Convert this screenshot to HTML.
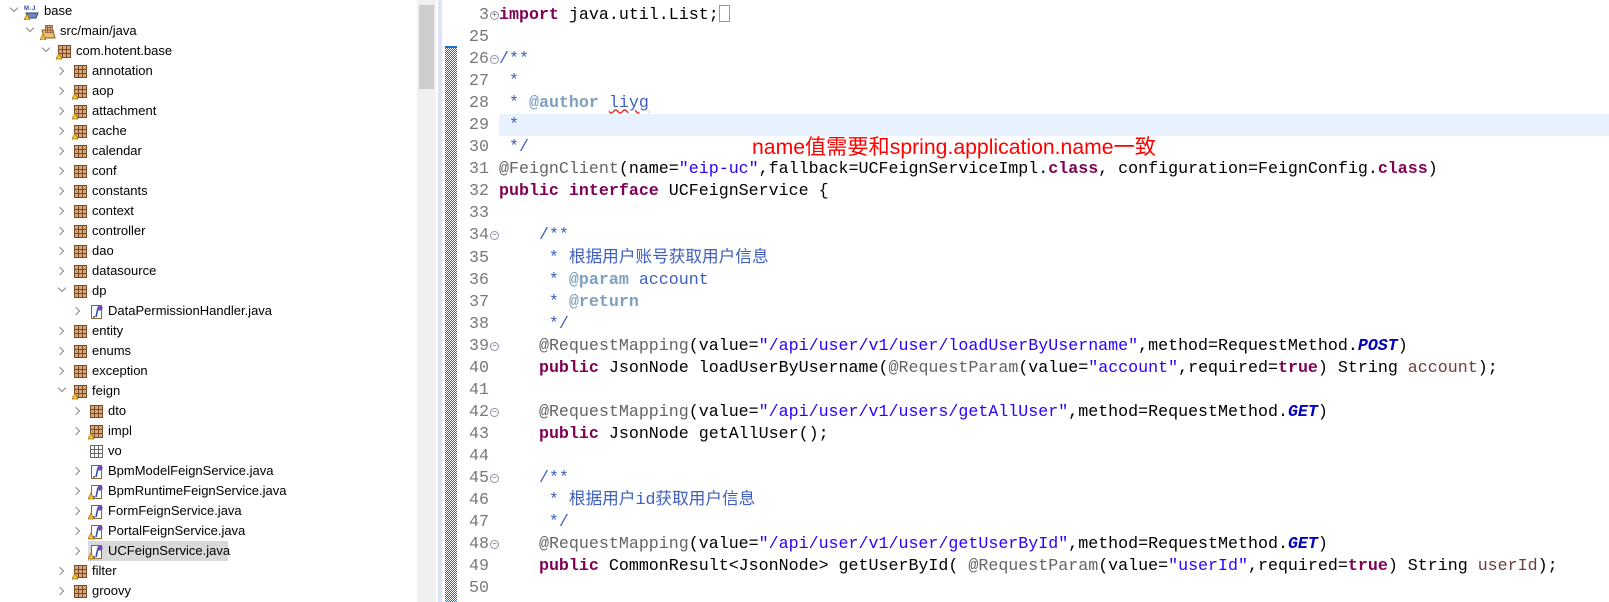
<!DOCTYPE html>
<html><head><meta charset="utf-8"><style>
body{margin:0;width:1609px;height:602px;overflow:hidden;background:#fff;position:relative;font-family:"Liberation Sans","Noto Sans CJK SC",sans-serif}
#tree{position:absolute;left:0;top:0;width:418px;height:602px;background:#fff}
.r{position:absolute;height:20px;line-height:20px;font-size:13px;color:#000;white-space:nowrap}
.r .ch{position:absolute;top:6px;width:5px;height:5px;border-right:1.5px solid #888;border-bottom:1.5px solid #888}
.r .ic{position:absolute;top:3px}
#sb{position:absolute;left:417px;top:0;width:19px;height:602px;background:#f0f0f0}
#thumb{position:absolute;left:419px;top:5px;width:15px;height:84px;background:#cdcdcd}
#ruler{position:absolute;left:438px;top:0;width:4px;height:602px;background:#dde4f5}
#hatch{position:absolute;left:445px;top:48px;width:12px;height:554px;background-color:#1a6fd6;background-image:repeating-conic-gradient(#fff 0 25%,#1a6fd6 0 50%);background-size:2px 2px}
#hatch:before{content:"";position:absolute;left:0;top:-2px;width:12px;height:2px;background:#1a6fd6}
#hl{position:absolute;left:499px;top:114px;width:1110px;height:22px;background:#e8f2fe}
#code{position:absolute;left:0;top:4px;font-family:"Liberation Mono","Noto Sans CJK SC",monospace;font-size:16.65px;line-height:22.05px}
.l{position:relative;height:22.05px;white-space:pre}
.n{position:absolute;left:440px;width:49px;text-align:right;color:#787878}
.f{position:absolute;left:490px;top:7px;width:7px;height:7px;border:1px solid #8a93a8;border-radius:50%;font-size:8px;line-height:7px;text-align:center;color:#556}
.t{position:absolute;left:499px;color:#000}
.k{color:#7f0055;font-weight:bold}
.c{color:#3f5fbf}
.jt{color:#7f9fbf;font-weight:bold}
.a{color:#646464}
.s{color:#2a00ff}
.e{color:#0000c0;font-weight:bold;font-style:italic}
#note{position:absolute;left:752px;top:135px;color:#f00;font-size:21.2px;line-height:26px;font-family:"Liberation Sans","Noto Sans CJK SC",sans-serif;white-space:nowrap}
</style></head><body>
<div id="tree">
<svg width="0" height="0" style="position:absolute"><defs>
<g id="pk"><rect x="0.5" y="0.5" width="12" height="12" fill="#d9a87a" stroke="#7a4a25"/><path d="M4.5 0.5v12M8.5 0.5v12M0.5 4.5h12M0.5 8.5h12" stroke="#7a4a25"/></g>
<g id="pe"><rect x="0.5" y="0.5" width="12" height="12" fill="#fff" stroke="#666"/><path d="M4.5 0.5v12M8.5 0.5v12M0.5 4.5h12M0.5 8.5h12" stroke="#666"/></g>
<g id="wn"><path d="M3 6l3 6h-6z" fill="#f5c542" stroke="#a07000" stroke-width="0.8"/></g>
<g id="jf"><rect x="1.5" y="0.5" width="10" height="13" fill="#fff" stroke="#8a6a2a"/><path d="M8 3l-2 9M5 12h-2" stroke="#3050b0" stroke-width="1.6" fill="none"/><circle cx="10" cy="3" r="2.6" fill="#6a4fb0"/></g>
</defs></svg>
</div>
<div id="sb"></div><div id="thumb"></div>
<div id="ruler"></div><div id="hatch"></div><div id="hl"></div>
<div id="note">name值需要和spring.application.name一致</div>
<div id="code"></div>
<script>
var items=[
[0,'e','base','prj'],[1,'e','src/main/java','src'],[2,'e','com.hotent.base','pkw'],
[3,'c','annotation','pk'],[3,'c','aop','pkw'],[3,'c','attachment','pkw'],[3,'c','cache','pkw'],[3,'c','calendar','pk'],[3,'c','conf','pk'],[3,'c','constants','pk'],[3,'c','context','pk'],[3,'c','controller','pk'],[3,'c','dao','pk'],[3,'c','datasource','pk'],
[3,'e','dp','pk'],[4,'c','DataPermissionHandler.java','jf'],[3,'c','entity','pk'],[3,'c','enums','pk'],[3,'c','exception','pk'],[3,'e','feign','pkw'],
[4,'c','dto','pk'],[4,'c','impl','pkw'],[4,'','vo','pe'],[4,'c','BpmModelFeignService.java','jf'],[4,'c','BpmRuntimeFeignService.java','jfw'],[4,'c','FormFeignService.java','jfw'],[4,'c','PortalFeignService.java','jfw'],[4,'c','UCFeignService.java','jfw'],[3,'c','filter','pkw'],[3,'c','groovy','pk']];
var h='';
items.forEach(function(it,i){
 var lv=it[0],x=13+lv*16,y=1.3+20*i;
 var ch='';
 if(it[1]=='e')ch='<span class="ch" style="left:'+(x-2)+'px;top:4px;transform:rotate(45deg)"></span>';
 else if(it[1]=='c')ch='<span class="ch" style="left:'+(x-4)+'px;top:7px;transform:rotate(-45deg)"></span>';
 var ix=x+11,icon='',t=it[3];
 if(t=='prj')icon='<svg class="ic" style="left:'+ix+'px" width="16" height="16"><text x="0" y="6" font-size="6" fill="#2a4a9a" font-weight="bold">M↓J</text><path d="M2 9h12l-2 5h-8z" fill="#6a8ad0" stroke="#345"/><use href="#wn" x="0" y="4"/></svg>';
 else if(t=='src')icon='<svg class="ic" style="left:'+ix+'px" width="16" height="16"><path d="M2 6h11l2 8H4z" fill="#e8c070" stroke="#8a5a20"/><use href="#pk" transform="translate(5,1) scale(.6)"/><use href="#wn" x="0" y="4"/></svg>';
 else if(t=='pk'||t=='pkw')icon='<svg class="ic" style="left:'+ix+'px" width="16" height="16"><use href="#pk" x="2" y="1"/>'+(t=='pkw'?'<use href="#wn" x="0" y="3"/>':'')+'</svg>';
 else if(t=='pe')icon='<svg class="ic" style="left:'+ix+'px" width="16" height="16"><use href="#pe" x="2" y="1"/></svg>';
 else icon='<svg class="ic" style="left:'+ix+'px" width="16" height="16"><use href="#jf" x="2" y="1"/>'+(t=='jfw'?'<use href="#wn" x="0" y="3"/>':'')+'</svg>';
 var sel=(it[2]=='UCFeignService.java')?'<div style="position:absolute;left:'+(ix)+'px;top:0;width:140px;height:20px;background:#d9d9d9"></div>':'';
 h+='<div class="r" style="left:0;top:'+y+'px;width:410px">'+sel+ch+icon+'<span style="position:absolute;left:'+(x+31)+'px">'+it[2]+'</span></div>';
});
document.getElementById('tree').insertAdjacentHTML('beforeend',h);
var L=[
['3','+','<span class="k">import</span> java.util.List;<span style="display:inline-block;width:9px;height:15px;border:1px solid #999;vertical-align:-3px"></span>'],
['25','',''],
['26','-','<span class="c">/**</span>'],
['27','','<span class="c"> *</span>'],
['28','','<span class="c"> * <span class="jt">@author</span> <span style="text-decoration:underline wavy #e04040">liyg</span></span>'],
['29','','<span class="c"> *</span>'],
['30','','<span class="c"> */</span>'],
['31','','<span class="a">@FeignClient</span>(name=<span class="s">"eip-uc"</span>,fallback=UCFeignServiceImpl.<span class="k">class</span>, configuration=FeignConfig.<span class="k">class</span>)'],
['32','','<span class="k">public</span> <span class="k">interface</span> UCFeignService {'],
['33','',''],
['34','-','    <span class="c">/**</span>'],
['35','','<span class="c">     * 根据用户账号获取用户信息</span>'],
['36','','<span class="c">     * <span class="jt">@param</span> account</span>'],
['37','','<span class="c">     * <span class="jt">@return</span></span>'],
['38','','<span class="c">     */</span>'],
['39','-','    <span class="a">@RequestMapping</span>(value=<span class="s">"/api/user/v1/user/loadUserByUsername"</span>,method=RequestMethod.<span class="e">POST</span>)'],
['40','','    <span class="k">public</span> JsonNode loadUserByUsername(<span class="a">@RequestParam</span>(value=<span class="s">"account"</span>,required=<span class="k">true</span>) String <span style="color:#6a3e3e">account</span>);'],
['41','',''],
['42','-','    <span class="a">@RequestMapping</span>(value=<span class="s">"/api/user/v1/users/getAllUser"</span>,method=RequestMethod.<span class="e">GET</span>)'],
['43','','    <span class="k">public</span> JsonNode getAllUser();'],
['44','',''],
['45','-','    <span class="c">/**</span>'],
['46','','<span class="c">     * 根据用户id获取用户信息</span>'],
['47','','<span class="c">     */</span>'],
['48','-','    <span class="a">@RequestMapping</span>(value=<span class="s">"/api/user/v1/user/getUserById"</span>,method=RequestMethod.<span class="e">GET</span>)'],
['49','','    <span class="k">public</span> CommonResult&lt;JsonNode&gt; getUserById( <span class="a">@RequestParam</span>(value=<span class="s">"userId"</span>,required=<span class="k">true</span>) String <span style="color:#6a3e3e">userId</span>);'],
['50','','']];
var c='';
L.forEach(function(l){
 c+='<div class="l"><span class="n">'+l[0]+'</span>'+(l[1]?'<span class="f">'+(l[1]=='+'?'+':'−')+'</span>':'')+'<span class="t">'+l[2]+'</span></div>';
});
document.getElementById('code').innerHTML=c;
</script>
</body></html>
